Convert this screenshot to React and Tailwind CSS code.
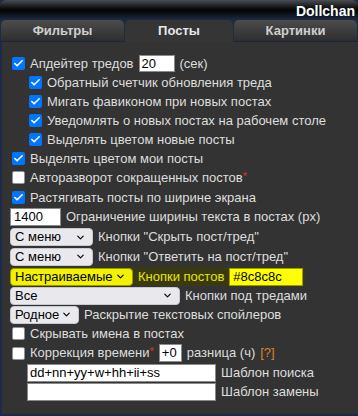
import { Check, ChevronDown } from "lucide-react";

function Box({ on }) {
  return (
    <span
      className={`w-[13px] h-[13px] shrink-0 rounded-[2px] flex items-center justify-center ${
        on ? "bg-[#0075ff]" : "bg-white border border-[#8f8f9d]"
      }`}
    >
      {on && <Check size={11} strokeWidth={3.5} className="text-white" />}
    </span>
  );
}

function Row({ on, indent, children, className = "" }) {
  return (
    <div className={`h-[19px] flex items-center gap-[5px] ${indent ? "pl-[27px]" : "pl-[10px]"} ${className}`}>
      <Box on={on} />
      <span>{children}</span>
    </div>
  );
}

function Select({ label, w, yellow }) {
  return (
    <span
      className={`h-[18px] ${w} shrink-0 rounded-[4px] flex items-center justify-between pl-[4px] pr-[6px] text-black ${
        yellow ? "bg-[#f2f200] border border-[#9a9a00]" : "bg-[#e9e9ed] border border-[#c8c8d0]"
      }`}
    >
      <span>{label}</span>
      <ChevronDown size={11} strokeWidth={2.5} />
    </span>
  );
}

function Tab({ label, active, w }) {
  return (
    <div
      className={`${w} h-[22px] rounded-t-[5px] flex items-center justify-center font-bold text-[13px] ${
        active
          ? "bg-[#353535] text-[#e8e8e8]"
          : "bg-linear-to-b from-[#4c4c4c] to-[#2e2e2e] text-[#cfcfcf] border-b border-[#1a2640]"
      }`}
    >
      {label}
    </div>
  );
}

export default function App() {
  return (
    <div className="w-[358px] h-[416px] bg-[#1d2a44] font-['Liberation_Sans',Arial,sans-serif] text-[13px] text-[#dedede] overflow-hidden">
      <div className="h-[20px] rounded-t-[6px] bg-linear-to-b from-[#4a4e56] via-[#050505] to-[#1d2a44] flex items-center justify-end pr-[3px] pt-[2px]">
        <span className="font-bold text-white text-[14px]">Dollchan</span>
      </div>
      <div className="flex gap-[1px] px-[1px]">
        <Tab label="Фильтры" w="w-[123px]" />
        <Tab label="Посты" w="w-[108px]" active />
        <Tab label="Картинки" w="w-[123px]" />
      </div>

      <div className="h-[374px] bg-[#333333] border-l-2 border-b-2 border-[#1d2b48] pt-[12px]">
        <div className="h-[19px] flex items-center gap-[5px] pl-[10px]">
          <Box on />
          <span>Апдейтер тредов</span>
          <span className="w-[36px] h-[17px] bg-white border border-[#8a8a8a] text-black pl-[2px] leading-[15px]">20</span>
          <span>(сек)</span>
        </div>
        <Row on indent>Обратный счетчик обновления треда</Row>
        <Row on indent>Мигать фавиконом при новых постах</Row>
        <Row on indent>Уведомлять о новых постах на рабочем столе</Row>
        <Row on indent>Выделять цветом новые посты</Row>
        <Row on>Выделять цветом мои посты</Row>
        <Row>
          Авторазворот сокращенных постов<span className="text-[#e03030] align-top text-[11px]">*</span>
        </Row>
        <Row on className="mt-[1px]">Растягивать посты по ширине экрана</Row>

        <div className="h-[19px] flex items-center gap-[5px] pl-[8px]">
          <span className="w-[51px] h-[18px] bg-white border border-[#8a8a8a] text-black pl-[3px] leading-[16px]">1400</span>
          <span>Ограничение ширины текста в постах (px)</span>
        </div>
        <div className="h-[20px] flex items-center gap-[5px] pl-[8px] mt-[1px]">
          <Select label="С меню" w="w-[83px]" />
          <span>Кнопки "Скрыть пост/тред"</span>
        </div>
        <div className="h-[19px] flex items-center gap-[5px] pl-[8px]">
          <Select label="С меню" w="w-[83px]" />
          <span>Кнопки "Ответить на пост/тред"</span>
        </div>
        <div className="h-[19px] flex items-center gap-[5px] pl-[8px] mt-[1px]">
          <div className="flex items-center gap-[5px] bg-[#3a3a12] h-[19px] pr-[2px]">
            <Select label="Настраиваемые" w="w-[123px]" yellow />
            <span className="text-[#e6e600]">Кнопки постов</span>
            <span className="w-[74px] h-[18px] bg-[#ffff00] border border-[#9a9a00] text-black pl-[3px] leading-[16px]">#8c8c8c</span>
          </div>
        </div>
        <div className="h-[19px] flex items-center gap-[5px] pl-[8px]">
          <Select label="Все" w="w-[170px]" />
          <span>Кнопки под тредами</span>
        </div>
        <div className="h-[19px] flex items-center gap-[5px] pl-[8px]">
          <Select label="Родное" w="w-[69px]" />
          <span>Раскрытие текстовых спойлеров</span>
        </div>
        <Row>Скрывать имена в постах</Row>
        <div className="h-[20px] flex items-center gap-[5px] pl-[10px]">
          <Box />
          <span>
            Коррекция времени<span className="text-[#e03030] text-[11px] align-top">*</span>
          </span>
          <span className="w-[23px] h-[18px] bg-white border border-[#8a8a8a] text-black pl-[2px] leading-[16px]">+0</span>
          <span>разница (ч)</span>
          <span className="text-[#d9822b]">[?]</span>
        </div>
        <div className="h-[19px] flex items-center gap-[5px] pl-[25px]">
          <span className="w-[189px] h-[18px] bg-white border border-[#8a8a8a] text-black pl-[2px] leading-[16px]">dd+nn+yy+w+hh+ii+ss</span>
          <span>Шаблон поиска</span>
        </div>
        <div className="h-[19px] flex items-center gap-[5px] pl-[25px]">
          <span className="w-[189px] h-[18px] bg-white border border-[#8a8a8a]" />
          <span>Шаблон замены</span>
        </div>
      </div>
    </div>
  );
}
